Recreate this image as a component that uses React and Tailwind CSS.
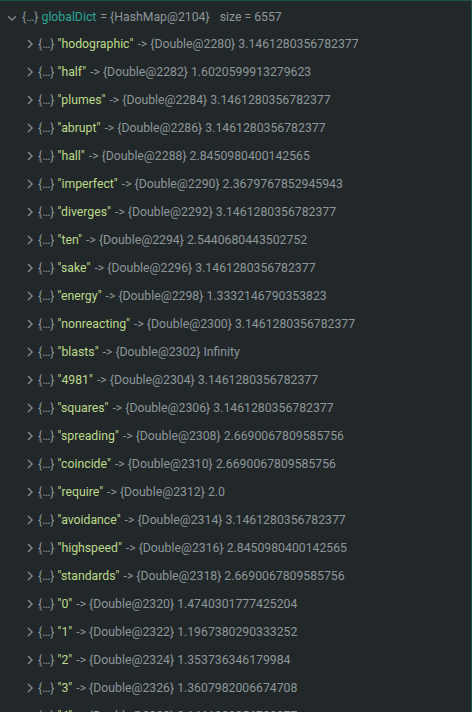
const rows = [
  ['hodographic', '2280', '3.1461280356782377'],
  ['half', '2282', '1.6020599913279623'],
  ['plumes', '2284', '3.1461280356782377'],
  ['abrupt', '2286', '3.1461280356782377'],
  ['hall', '2288', '2.8450980400142565'],
  ['imperfect', '2290', '2.3679767852945943'],
  ['diverges', '2292', '3.1461280356782377'],
  ['ten', '2294', '2.5440680443502752'],
  ['sake', '2296', '3.1461280356782377'],
  ['energy', '2298', '1.3332146790353823'],
  ['nonreacting', '2300', '3.1461280356782377'],
  ['blasts', '2302', 'Infinity'],
  ['4981', '2304', '3.1461280356782377'],
  ['squares', '2306', '3.1461280356782377'],
  ['spreading', '2308', '2.6690067809585756'],
  ['coincide', '2310', '2.6690067809585756'],
  ['require', '2312', '2.0'],
  ['avoidance', '2314', '3.1461280356782377'],
  ['highspeed', '2316', '2.8450980400142565'],
  ['standards', '2318', '2.6690067809585756'],
  ['0', '2320', '1.4740301777425204'],
  ['1', '2322', '1.1967380290333252'],
  ['2', '2324', '1.353736346179984'],
  ['3', '2326', '1.3607982006674708'],
  ['4', '2328', '3.1461280356782377'],
]

function Chevron({ down }) {
  return (
    <svg width="12" height="12" viewBox="0 0 12 12" className="shrink-0">
      <path
        d={down ? 'M2 4.2 L6 8 L10 4.2' : 'M4 2 L8 6 L4 10'}
        fill="none"
        stroke="#7d8588"
        strokeWidth="1.5"
      />
    </svg>
  )
}

export default function App() {
  return (
    <div
      className="w-[472px] h-[712px] overflow-hidden bg-[#22282a] border-t border-r border-[#1e5246] pt-[1px] text-[12.25px] text-[#8d9699]"
      style={{ fontFamily: 'Roboto, "Liberation Sans", sans-serif' }}
    >
      <div className="h-[28px] pt-[3px] flex items-center pl-[6px] whitespace-nowrap">
        <Chevron down />
        <span className="ml-[4px]">{'{…}'}</span>
        <span className="text-[#2aa596] ml-[3px]">globalDict</span>
        <span className="ml-[4px]">= {'{HashMap@2104}'}</span>
        <span className="ml-[10px]">size = 6557</span>
      </div>
      {rows.map(([k, id, v]) => (
        <div key={k} className="h-[28px] flex items-center pl-[24px] whitespace-nowrap">
          <Chevron />
          <span className="ml-[2px]">{'{…}'}</span>
          <span className="text-[#bcd98a] ml-[3px]">"{k}"</span>
          <span className="ml-[4px]">-&gt; {'{Double@' + id + '}'} {v}</span>
        </div>
      ))}
    </div>
  )
}
